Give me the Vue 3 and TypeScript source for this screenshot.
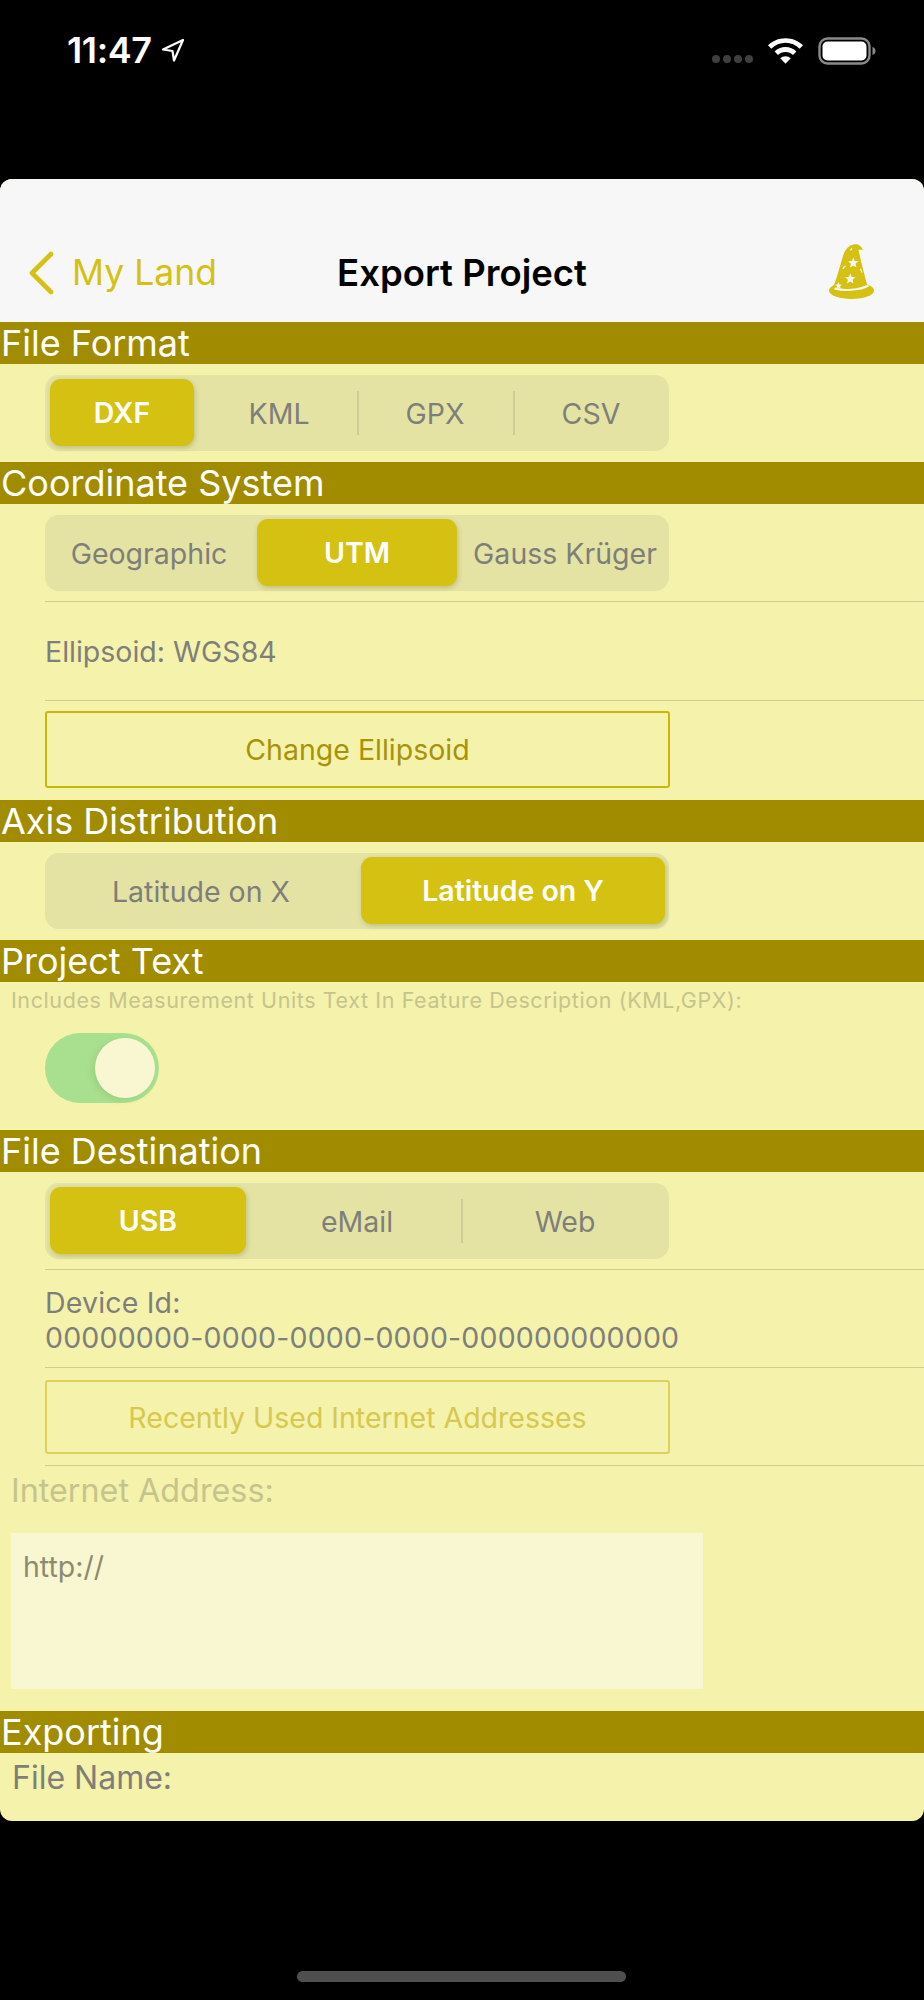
<script setup lang="ts">
interface SegControl {
  items: string[]
  selected: number
  tight?: boolean
}

const fileFormat: SegControl = { items: ['DXF', 'KML', 'GPX', 'CSV'], selected: 0, tight: true }
const coordinateSystem: SegControl = { items: ['Geographic', 'UTM', 'Gauss Krüger'], selected: 1 }
const axis: SegControl = { items: ['Latitude on X', 'Latitude on Y'], selected: 1 }
const destination: SegControl = { items: ['USB', 'eMail', 'Web'], selected: 0, tight: true }

function hasDivider(c: SegControl, i: number): boolean {
  return i > 0 && i !== c.selected && i - 1 !== c.selected
}
</script>

<template>
  <div class="page">
    <header class="status">
      <div class="status-left">
        <span class="time">11:47</span>
        <svg class="loc" width="24" height="24" viewBox="0 0 24 24">
          <path d="M22 2 2 11.5l9.5 1.5 1.5 9.5z" fill="none" stroke="#fff" stroke-width="2.2" stroke-linejoin="round" />
        </svg>
      </div>
      <div class="status-right">
        <span class="dots"><i></i><i></i><i></i><i></i></span>
        <svg class="wifi" width="35" height="26" viewBox="1.5 2 32 23.5">
          <path d="M17.5 2C11 2 5.6 4.5 1.5 8.5l3 3.2C8 8.3 12.5 6.3 17.5 6.3s9.5 2 13 5.4l3-3.2C29.4 4.5 24 2 17.5 2z" fill="#fff" />
          <path d="M17.5 10.2c-4 0-7.300 1.600-9.900 4l3 3.200c1.800-1.700 4.200-2.800 6.900-2.800s5.100 1.100 6.900 2.800l3-3.200c-2.600-2.400-5.900-4-9.900-4z" fill="#fff" />
          <path d="M17.500 18.500c-1.900 0-3.500.7-4.800 1.800l4.800 5.200 4.800-5.200c-1.300-1.100-2.900-1.800-4.800-1.800z" fill="#fff" />
        </svg>
        <svg class="battery" width="58" height="28" viewBox="0 0 58 28">
          <rect x="1.500" y="1.500" width="50" height="25" rx="8" fill="none" stroke="#8a8a8a" stroke-width="2.400" />
          <rect x="4.500" y="4.500" width="44" height="19" rx="5" fill="#fff" />
          <path d="M54.500 10c2 .6 3 2.200 3 4s-1 3.400-3 4z" fill="#8a8a8a" />
        </svg>
      </div>
    </header>

    <main class="sheet">
      <nav class="navbar">
        <div class="back">
          <svg width="28" height="44" viewBox="0 0 28 44">
            <path d="M24 3 5 22l19 19" fill="none" stroke="#d5c111" stroke-width="4.600" stroke-linecap="round" stroke-linejoin="round" />
          </svg>
          <span class="back-label">My Land</span>
        </div>
        <h1 class="title">Export Project</h1>
        <svg class="hat" width="45" height="55" viewBox="0 0 45 55">
          <path d="M4.500 42C8 34 11 22 14 12 16 5 20 .8 26 .2c3-.3 6.500 1.200 8 6.300-2-1.200-3.500-1.300-4.500-.3C32 17 35 30 38.500 42z" fill="#d5c111" />
          <ellipse cx="22.500" cy="46.500" rx="22.500" ry="8.500" fill="#d5c111" />
          <path d="M5.500 44.500C15 47 30 46.500 39.500 41.500" fill="none" stroke="#f7f7f7" stroke-width="2" />
          <polygon points="24.300,13.500 25.700,17 29.500,17.300 26.500,19.700 27.500,23.500 24.300,21.400 21,23.500 22,19.700 19,17.300 22.800,17" fill="#f7f7f7" />
          <polygon points="21.300,29.500 22.700,33 26.500,33.300 23.500,35.700 24.500,39.500 21.300,37.400 18,39.500 19,35.700 16,33.300 19.800,33" fill="#f7f7f7" />
          <polygon points="9.500,38 10.500,40.500 13,40.700 11,42.300 11.700,44.800 9.500,43.400 7.300,44.800 8,42.300 6,40.700 8.500,40.500" fill="#f7f7f7" />
          <path d="M16.500 22c-1.300.6-2 1.500-2.500 3M31 25c1.300.8 1.800 2 1.500 3.500M23 4.500c-.8.500-1.200 1-1.300 2" fill="none" stroke="#f7f7f7" stroke-width="1.300" />
        </svg>
      </nav>

      <h2 class="band">File Format</h2>
      <div class="seg" :class="{ tight: fileFormat.tight }">
        <button v-for="(item, i) in fileFormat.items" :key="item" class="seg-item" :class="{ on: i === fileFormat.selected, div: hasDivider(fileFormat, i) }">{{ item }}</button>
      </div>

      <h2 class="band band-coord">Coordinate System</h2>
      <div class="seg">
        <button v-for="(item, i) in coordinateSystem.items" :key="item" class="seg-item" :class="{ on: i === coordinateSystem.selected, div: hasDivider(coordinateSystem, i) }">{{ item }}</button>
      </div>
      <hr class="rule" />
      <div class="info info-ellipsoid">Ellipsoid: WGS84</div>
      <hr class="rule" />
      <button class="outline outline-change">Change Ellipsoid</button>

      <h2 class="band band-axis">Axis Distribution</h2>
      <div class="seg">
        <button v-for="(item, i) in axis.items" :key="item" class="seg-item" :class="{ on: i === axis.selected, div: hasDivider(axis, i) }">{{ item }}</button>
      </div>

      <h2 class="band band-text">Project Text</h2>
      <p class="hint">Includes Measurement Units Text In Feature Description (KML,GPX):</p>
      <div class="toggle"><span class="knob"></span></div>

      <h2 class="band band-dest">File Destination</h2>
      <div class="seg" :class="{ tight: destination.tight }">
        <button v-for="(item, i) in destination.items" :key="item" class="seg-item" :class="{ on: i === destination.selected, div: hasDivider(destination, i) }">{{ item }}</button>
      </div>
      <hr class="rule" />
      <div class="info info-device">Device Id:<br />00000000-0000-0000-0000-000000000000</div>
      <hr class="rule" />
      <button class="outline outline-recent">Recently Used Internet Addresses</button>
      <hr class="rule rule-c" />
      <div class="address-label">Internet Address:</div>
      <div class="address-box">http://</div>

      <h2 class="band band-export">Exporting</h2>
      <div class="file-name">File Name:</div>
    </main>

    <div class="home"></div>
  </div>
</template>

<style scoped>
.page {
  width: 924px;
  height: 2000px;
  background: #000;
  font-family: Inter, "Liberation Sans", sans-serif;
  display: flex;
  flex-direction: column;
  overflow: hidden;
}
.status {
  height: 179px;
  flex: none;
  box-sizing: border-box;
  padding: 28px 48px 0 67px;
  display: flex;
  justify-content: space-between;
  align-items: flex-start;
}
.status-left {
  display: flex;
  align-items: center;
  gap: 9px;
}
.time {
  color: #fff;
  font-size: 36px;
  line-height: 44px;
  font-weight: 600;
  letter-spacing: -0.4px;
}
.status-right {
  display: flex;
  align-items: center;
  margin-top: 9px;
}
.dots {
  display: flex;
  gap: 3px;
  margin-top: 16px;
  margin-right: 15px;
}
.dots i {
  width: 8px;
  height: 8px;
  border-radius: 50%;
  background: #3f3f3f;
}
.wifi {
  margin-right: 15px;
}
.sheet {
  width: 924px;
  height: 1642px;
  flex: none;
  background: #f5f2ab;
  border-radius: 12px;
  overflow: hidden;
  display: flex;
  flex-direction: column;
}
.navbar {
  height: 143px;
  flex: none;
  background: #f7f7f7;
  display: flex;
  align-items: flex-end;
  position: relative;
}
.back {
  display: flex;
  align-items: center;
  padding: 0 0 27px 27px;
  gap: 17px;
}
.back-label {
  color: #d5c111;
  font-size: 35.5px;
  line-height: 44px;
}
.title {
  position: absolute;
  left: 0;
  right: 0;
  bottom: 27px;
  margin: 0;
  text-align: center;
  font-size: 36.5px;
  line-height: 44px;
  font-weight: 600;
  color: #000;
}
.hat {
  position: absolute;
  left: 829px;
  top: 65px;
}
.band {
  margin: 0;
  height: 42px;
  flex: none;
  background: #a18c00;
  color: #fff;
  font-size: 36px;
  line-height: 42px;
  font-weight: 400;
  padding-left: 1px;
  overflow: hidden;
}
.band-coord { margin-top: 11px; }
.band-axis { margin-top: 12px; }
.band-text { margin-top: 11px; }
.band-dest { margin-top: 27px; }
.band-export { margin-top: 22px; }
.seg {
  margin: 11px 0 0 45px;
  width: 624px;
  height: 76px;
  flex: none;
  background: #e4e3a4;
  border-radius: 14px;
  display: grid;
  grid-auto-flow: column;
  grid-auto-columns: 1fr;
}
.seg-item {
  min-width: 0;
  padding: 0;
  border: 0;
  background: transparent;
  color: #7f7f7a;
  font-family: inherit;
  font-size: 28.5px;
  position: relative;
  white-space: nowrap;
}
.seg-item.div::before {
  content: "";
  position: absolute;
  left: 0;
  top: 16px;
  bottom: 16px;
  width: 1.5px;
  background: #cdcc95;
}
.seg-item.on {
  margin: 4px 4px 5px;
  background: #d5c111;
  color: #fff;
  font-weight: 600;
  border-radius: 11px;
  box-shadow: 1px 2px 5px rgba(120, 110, 30, 0.3);
}
.seg.tight .seg-item.on {
  margin: 4px 7px 5px 5px;
}
.rule {
  margin: 10px 0 0 45px;
  border: 0;
  height: 1px;
  flex: none;
  background: #cfcc92;
}
.rule-c { margin-top: 11px; }
.info {
  margin-left: 45px;
  color: #7f7f7a;
  font-size: 28.5px;
  flex: none;
  box-sizing: border-box;
}
.info-ellipsoid {
  height: 88px;
  padding-top: 32px;
  line-height: 36px;
}
.info-device {
  line-height: 34.5px;
  padding-top: 16px;
  height: 87px;
  white-space: nowrap;
  letter-spacing: 0.18px;
}
.outline {
  flex: none;
  display: block;
  margin: 10px 0 0 45px;
  width: 625px;
  height: 77px;
  box-sizing: border-box;
  border: 2px solid #cbb60c;
  background: transparent;
  border-radius: 3px;
  color: #a8920a;
  font-family: inherit;
  font-size: 28.5px;
  padding: 0;
}
.outline-recent {
  margin-top: 12px;
  height: 74px;
  border-color: #ddd05c;
  color: #d6c850;
}
.hint {
  margin: 6px 0 0 11px;
  height: 24px;
  font-size: 21.5px;
  line-height: 24px;
  color: #c6c48d;
  white-space: nowrap;
  letter-spacing: 0.6px;
}
.toggle {
  margin: 21px 0 0 45px;
  width: 114px;
  height: 70px;
  flex: none;
  box-sizing: border-box;
  padding: 5px 4px;
  background: #a9e08f;
  border-radius: 35px;
  display: flex;
  justify-content: flex-end;
}
.knob {
  width: 60px;
  height: 60px;
  border-radius: 50%;
  background: #f9f7d2;
  box-shadow: -3px 2px 6px rgba(90, 120, 60, 0.15);
}
.address-label {
  margin: 7px 0 0 11px;
  height: 36px;
  line-height: 36px;
  font-size: 32.300px;
  color: #c6c48d;
  flex: none;
}
.address-box {
  margin: 24px 0 0 11px;
  width: 692px;
  height: 156px;
  flex: none;
  box-sizing: border-box;
  padding: 16px 12px;
  background: #f9f7d2;
  color: #8c8b70;
  font-size: 28.5px;
  line-height: 36px;
}
.file-name {
  margin: 7px 0 0 12px;
  font-size: 32px;
  line-height: 36px;
  color: #7f7f7a;
}
.home {
  width: 329px;
  height: 11px;
  flex: none;
  margin: 150px 0 0 297px;
  background: #4f4f4f;
  border-radius: 6px;
}
</style>
